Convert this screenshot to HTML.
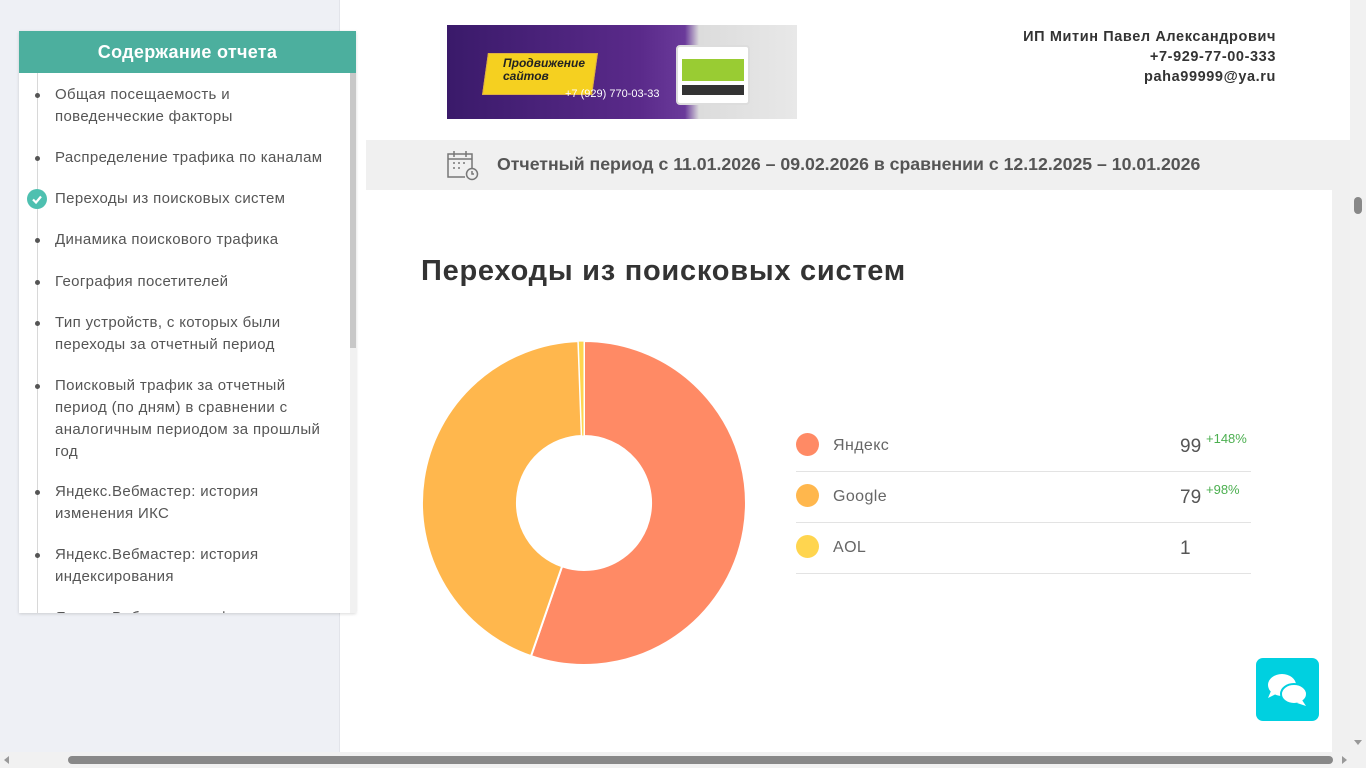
<!DOCTYPE html>
<html><head><meta charset="utf-8"><style>
*{margin:0;padding:0;box-sizing:border-box}
body{width:1366px;height:768px;overflow:hidden;position:relative;font-family:"Liberation Sans","DejaVu Sans",sans-serif;background:#fff}
.left{position:absolute;left:0;top:0;width:340px;height:752px;background:#eef0f5;border-right:1px solid #e2e4ea}
.panel{position:absolute;left:19px;top:31px;width:337px;height:582px;background:#fff;box-shadow:0 1px 3px rgba(0,0,0,.15);overflow:hidden;z-index:5}
.ph{height:42px;background:#4caf9e;color:#fff;font-weight:bold;font-size:18px;text-align:center;line-height:42px;letter-spacing:.3px}
.line{position:absolute;left:18px;top:42px;width:1px;height:540px;background:#d8d8d8}
.psb{position:absolute;left:331px;top:42px;width:6px;height:540px;background:#f1f1f1}
.psb i{position:absolute;left:0;top:0;width:6px;height:275px;background:#c8c8c8}
.it{position:absolute;left:36px;font-size:15px;color:#555;line-height:22px;width:276px;letter-spacing:.35px}
.it:before{content:"";position:absolute;left:-20px;top:9px;width:5px;height:5px;border-radius:50%;background:#555}
.it.ck:before{display:none}
.chk{position:absolute;left:8px;top:158px;width:20px;height:20px;border-radius:50%;background:#4ec0b0}
.main{position:absolute;left:340px;top:0;width:1010px;height:752px;background:#fff}
.grey{position:absolute;left:366px;top:140px;width:984px;height:612px;background:#f0f0f0}
.card{position:absolute;left:366px;top:190px;width:966px;height:562px;background:#fff}
.contact{position:absolute;right:90px;top:27px;text-align:right;font-weight:bold;font-size:14.5px;color:#333;line-height:20px;letter-spacing:.6px}
.period{position:absolute;left:497px;top:154px;font-size:17.7px;font-weight:bold;color:#555}
h1{position:absolute;left:421px;top:255px;font-size:29px;font-weight:bold;color:#333;letter-spacing:.75px}
.row{position:absolute;left:796px;width:455px;height:51px;border-bottom:1px solid #e3e3e3}
.row .d{position:absolute;left:0;top:12px;width:23px;height:23px;border-radius:50%}
.row .n{position:absolute;left:37px;top:16px;font-size:16px;color:#666;letter-spacing:.4px}
.row .v{position:absolute;left:384px;top:15px;font-size:19px;color:#555}
.row .p{position:absolute;left:410px;top:10px;font-size:13px;color:#4caf50}
.vsb{position:absolute;left:1350px;top:0;width:16px;height:752px;background:#f1f1f1}
.hsb{position:absolute;left:0;top:752px;width:1366px;height:16px;background:#f1f1f1}
</style></head><body>
<div class="left"></div>
<div class="main"></div>
<div class="panel"><div class="ph">Содержание отчета</div><div class="line"></div>
<div class="psb"><i></i></div>
<div class="it" style="top:53px">Общая посещаемость и поведенческие факторы</div>
<div class="it" style="top:116px">Распределение трафика по каналам</div>
<div class="chk"><svg width="20" height="20"><path d="M6 10.5l3 3 5-6" stroke="#fff" stroke-width="2.2" fill="none"/></svg></div>
<div class="it ck" style="top:157px">Переходы из поисковых систем</div>
<div class="it" style="top:198px">Динамика поискового трафика</div>
<div class="it" style="top:240px">География посетителей</div>
<div class="it" style="top:281px">Тип устройств, с которых были переходы за отчетный период</div>
<div class="it" style="top:344px">Поисковый трафик за отчетный период (по дням) в сравнении с аналогичным периодом за прошлый год</div>
<div class="it" style="top:450px">Яндекс.Вебмастер: история изменения ИКС</div>
<div class="it" style="top:513px">Яндекс.Вебмастер: история индексирования</div>
<div class="it" style="top:576px">Яндекс.Вебмастер: информация</div>
</div>
<div style="position:absolute;left:447px;top:25px;width:350px;height:94px;background:linear-gradient(90deg,#3a1a6a,#5a2a8a 55%,#6a3a9a 68%,#dcdcdc 72%,#e8e8e8);overflow:hidden">
<div style="position:absolute;left:38px;top:28px;width:110px;height:42px;background:#f5d020;transform:skewX(-8deg);border:1px solid #e0b040"></div>
<div style="position:absolute;left:56px;top:32px;font-size:12px;font-style:italic;font-weight:bold;color:#222;line-height:13px">Продвижение<br>сайтов</div>
<div style="position:absolute;left:118px;top:63px;font-size:11px;color:#fff">+7 (929) 770-03-33</div>
<div style="position:absolute;left:229px;top:20px;width:74px;height:60px;background:#fff;border-radius:4px;border:2px solid #ddd"><div style="margin:12px 4px 0;height:22px;background:#9c3"></div><div style="margin:4px;height:10px;background:#333"></div></div>
</div>
<div class="contact">ИП Митин Павел Александрович<br>+7-929-77-00-333<br>paha99999@ya.ru</div>
<div class="grey"></div>
<div class="card"></div>
<svg style="position:absolute;left:446px;top:149px" width="34" height="32" viewBox="0 0 34 32" fill="none" stroke="#777" stroke-width="1.5"><path d="M26 19V5H2v23h17"/><path d="M2 10h24M8 2v6M20 2v6"/><path d="M7 14h2M12 14h2M17 14h2M7 19h2M12 19h2"/><circle cx="26" cy="25" r="5.5"/><path d="M26 22v3h2"/></svg>
<div class="period">Отчетный период с 11.01.2026 – 09.02.2026 в сравнении с 12.12.2025 – 10.01.2026</div>
<h1>Переходы из поисковых систем</h1>
<svg style="position:absolute;left:0;top:0" width="1366" height="768">
<path d="M584 341A162 162 0 1 1 531 656.1L562.1 566.3A67 67 0 1 0 584 436Z" fill="#ff8a65" stroke="#fff" stroke-width="2"/>
<path d="M531 656.1A162 162 0 0 1 578.3 341.1L581.7 436A67 67 0 0 0 562.1 566.3Z" fill="#ffb74d" stroke="#fff" stroke-width="2"/>
<path d="M578.3 341.1A162 162 0 0 1 584 341L584 436A67 67 0 0 0 581.7 436Z" fill="#ffd54f" stroke="#fff" stroke-width="1"/>
</svg>
<div class="row" style="top:421px"><div class="d" style="background:#ff8a65"></div><div class="n">Яндекс</div><div class="v">99</div><div class="p">+148%</div></div>
<div class="row" style="top:472px"><div class="d" style="background:#ffb74d"></div><div class="n">Google</div><div class="v">79</div><div class="p">+98%</div></div>
<div class="row" style="top:523px"><div class="d" style="background:#ffd54f"></div><div class="n">AOL</div><div class="v">1</div></div>
<div style="position:absolute;left:1256px;top:658px;width:63px;height:63px;border-radius:7px;background:#00d0e0">
<svg width="63" height="63" viewBox="0 0 63 63" fill="#fff"><ellipse cx="26" cy="27" rx="14" ry="11"/><path d="M15 33l-3 7 8-4z"/><ellipse cx="38" cy="36" rx="13" ry="10" stroke="#00d0e0" stroke-width="2"/><path d="M46 42l4 6-9-3z"/></svg></div>
<div class="vsb"><div style="position:absolute;left:4px;top:197px;width:8px;height:17px;border-radius:4px;background:#888"></div><div style="position:absolute;left:4px;top:740px;border:4px solid transparent;border-top:5px solid #999"></div></div>
<div class="hsb"><div style="position:absolute;left:68px;top:4px;width:1265px;height:8px;border-radius:4px;background:#888"></div><div style="position:absolute;left:4px;top:4px;border:4px solid transparent;border-right:5px solid #999;border-left:0"></div><div style="position:absolute;left:1342px;top:4px;border:4px solid transparent;border-left:5px solid #999;border-right:0"></div></div>
</body></html>
